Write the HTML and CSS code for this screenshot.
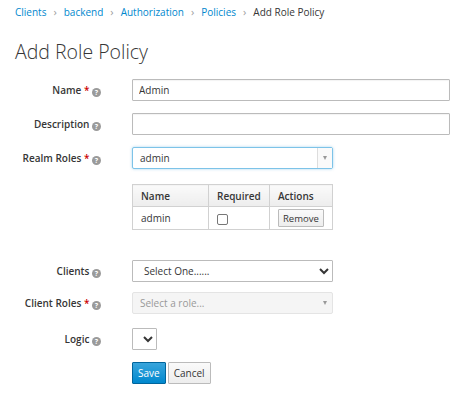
FILE: index.html
```html
<!DOCTYPE html>
<html lang="en">
<head>
<meta charset="utf-8">
<title>Add Role Policy</title>
<link rel="stylesheet" href="styles.css">
</head>
<body>
<div class="page">
  <ol class="breadcrumb">
    <li><a href="#">Clients</a></li>
    <li><a href="#">backend</a></li>
    <li><a href="#">Authorization</a></li>
    <li><a href="#">Policies</a></li>
    <li class="active">Add Role Policy</li>
  </ol>
  <h1 class="title">Add Role Policy</h1>
  <form class="form">
    <div class="row row-name">
      <label class="label">Name <span class="req">*</span> <span class="help">?</span></label>
      <div class="control"><input class="input" type="text" value="Admin"></div>
    </div>
    <div class="row row-desc">
      <label class="label">Description <span class="help">?</span></label>
      <div class="control"><input class="input" type="text" value=""></div>
    </div>
    <div class="row row-realm">
      <label class="label">Realm Roles <span class="req">*</span> <span class="help">?</span></label>
      <div class="control">
        <div class="s2 s2-focus">
          <span class="s2-text">admin</span>
          <span class="s2-arrow sep"><span class="tri"></span></span>
        </div>
      </div>
    </div>
    <div class="row row-table">
      <span></span>
      <div class="control">
        <table class="tbl">
          <thead>
            <tr><th class="c1">Name</th><th class="c2">Required</th><th class="c3">Actions</th></tr>
          </thead>
          <tbody>
            <tr><td>admin</td><td><span class="chk"></span></td><td><button type="button" class="btn btn-default btn-sm">Remove</button></td></tr>
          </tbody>
        </table>
      </div>
    </div>
    <div class="row row-clients">
      <label class="label">Clients <span class="help">?</span></label>
      <div class="control"><select class="select"><option>Select One......</option></select></div>
    </div>
    <div class="row row-croles">
      <label class="label">Client Roles <span class="req">*</span> <span class="help">?</span></label>
      <div class="control">
        <div class="s2 s2-disabled">
          <span class="s2-text">Select a role...</span>
          <span class="s2-arrow"><span class="tri"></span></span>
        </div>
      </div>
    </div>
    <div class="row row-logic">
      <label class="label">Logic <span class="help">?</span></label>
      <div class="control"><select class="select select-logic"><option></option></select></div>
    </div>
    <div class="row row-buttons">
      <span></span>
      <div class="control buttons">
        <button type="button" class="btn btn-primary">Save</button>
        <button type="button" class="btn btn-default">Cancel</button>
      </div>
    </div>
  </form>
</div>
</body>
</html>
```

FILE: styles.css
```css
html, body {
  margin: 0;
  padding: 0;
  background: #fff;
}
body {
  font-family: "Open Sans", "Liberation Sans", sans-serif;
  font-size: 10px;
  color: #363636;
}
.page {
  padding: 0 22px 0 15px;
}
.breadcrumb {
  list-style: none;
  margin: 0;
  padding: 5px 0 0;
  display: flex;
  line-height: 14px;
  font-size: 10px;
}
.breadcrumb li + li::before {
  content: "›";
  color: #9c9c9c;
  padding: 0 7px;
  font-size: 11px;
}
.breadcrumb a {
  color: #0088ce;
  text-decoration: none;
}
.breadcrumb .active {
  color: #363636;
}
.title {
  margin: 20px 0 0;
  font-weight: 300;
  font-size: 19.5px;
  line-height: 26px;
  color: #363636;
}
.form {
  margin-top: 14px;
  display: flex;
  flex-direction: column;
}
.row {
  display: grid;
  grid-template-columns: 86px 1fr;
  column-gap: 31px;
  align-items: center;
}
.row-name, .row-desc { margin-bottom: 12px; }
.row-realm { margin-bottom: 15px; }
.row-table { margin-bottom: 30px; }
.row-clients { margin-bottom: 10px; }
.row-croles { margin-bottom: 14px; }
.row-logic { margin-bottom: 12px; }
.label {
  text-align: right;
  font-weight: 600;
  white-space: nowrap;
}
.req {
  color: #cc0000;
}
.help {
  display: inline-block;
  width: 9px;
  height: 9px;
  border-radius: 50%;
  background: #9a9a9a;
  color: #fff;
  font-size: 7px;
  line-height: 9px;
  text-align: center;
  font-weight: 700;
  vertical-align: -0.5px;
}
.input {
  box-sizing: border-box;
  width: 100%;
  height: 22px;
  margin: 0;
  padding: 0 6px;
  border: 1px solid #bbb;
  border-radius: 1px;
  font-family: inherit;
  font-size: 10px;
  color: #363636;
  box-shadow: inset 0 1px 1px rgba(3,3,3,0.05);
}
.s2 {
  box-sizing: border-box;
  width: 201px;
  height: 22px;
  display: flex;
  align-items: center;
  border: 1px solid #bbb;
  border-radius: 2px;
  background: #fff;
}
.s2-focus {
  border-color: #7dc3e8;
  box-shadow: 0 0 3px rgba(0,136,206,0.35);
}
.s2-disabled {
  background: #f5f5f5;
  border-color: #e4e4e4;
  color: #999;
}
.s2-text {
  flex: 1;
  padding-left: 7px;
}
.s2-arrow {
  width: 14px;
  height: 100%;
  display: flex;
  align-items: center;
  justify-content: center;
}
.s2-arrow.sep {
  border-left: 1px solid #ddd;
  background: #fafafa;
}
.tri {
  width: 0;
  height: 0;
  border-left: 2.5px solid transparent;
  border-right: 2.5px solid transparent;
  border-top: 4px solid #999;
}
.tbl {
  border-collapse: collapse;
  width: 201px;
  font-size: 10px;
}
.tbl th, .tbl td {
  border: 1px solid #d1d1d1;
  text-align: left;
  padding: 0 0 0 8px;
}
.tbl th {
  height: 21px;
  font-weight: 600;
  background: linear-gradient(#fafafa, #ededed);
}
.tbl td {
  height: 22px;
}
.tbl .c1 { width: 67px; }
.tbl .c2 { width: 52px; }
.chk {
  display: inline-block;
  width: 9px;
  height: 9px;
  border: 1px solid #777;
  border-radius: 2px;
  vertical-align: middle;
  background: #fff;
}
.btn {
  font-family: inherit;
  font-size: 10px;
  margin: 0;
  padding: 0 5px;
  height: 22px;
  border-radius: 1px;
  border: 1px solid #bbb;
  cursor: pointer;
}
.btn-default {
  background: linear-gradient(#fafafa, #ededed);
  color: #363636;
}
.btn-primary {
  background: linear-gradient(#39a5dc, #0088ce);
  border-color: #00659c;
  color: #fff;
}
.btn-sm {
  height: 18px;
  padding: 0 4px;
  font-size: 9.5px;
}
.buttons {
  display: flex;
  gap: 2px;
}
.select {
  box-sizing: border-box;
  width: 201px;
  height: 22px;
  margin: 0;
  padding: 0 0 0 7px;
  border: 1px solid #bbb;
  border-radius: 1px;
  background: #fff;
  font-family: inherit;
  font-size: 10px;
  color: #363636;
}
.select-logic {
  width: 25px;
  padding: 0;
}
```
